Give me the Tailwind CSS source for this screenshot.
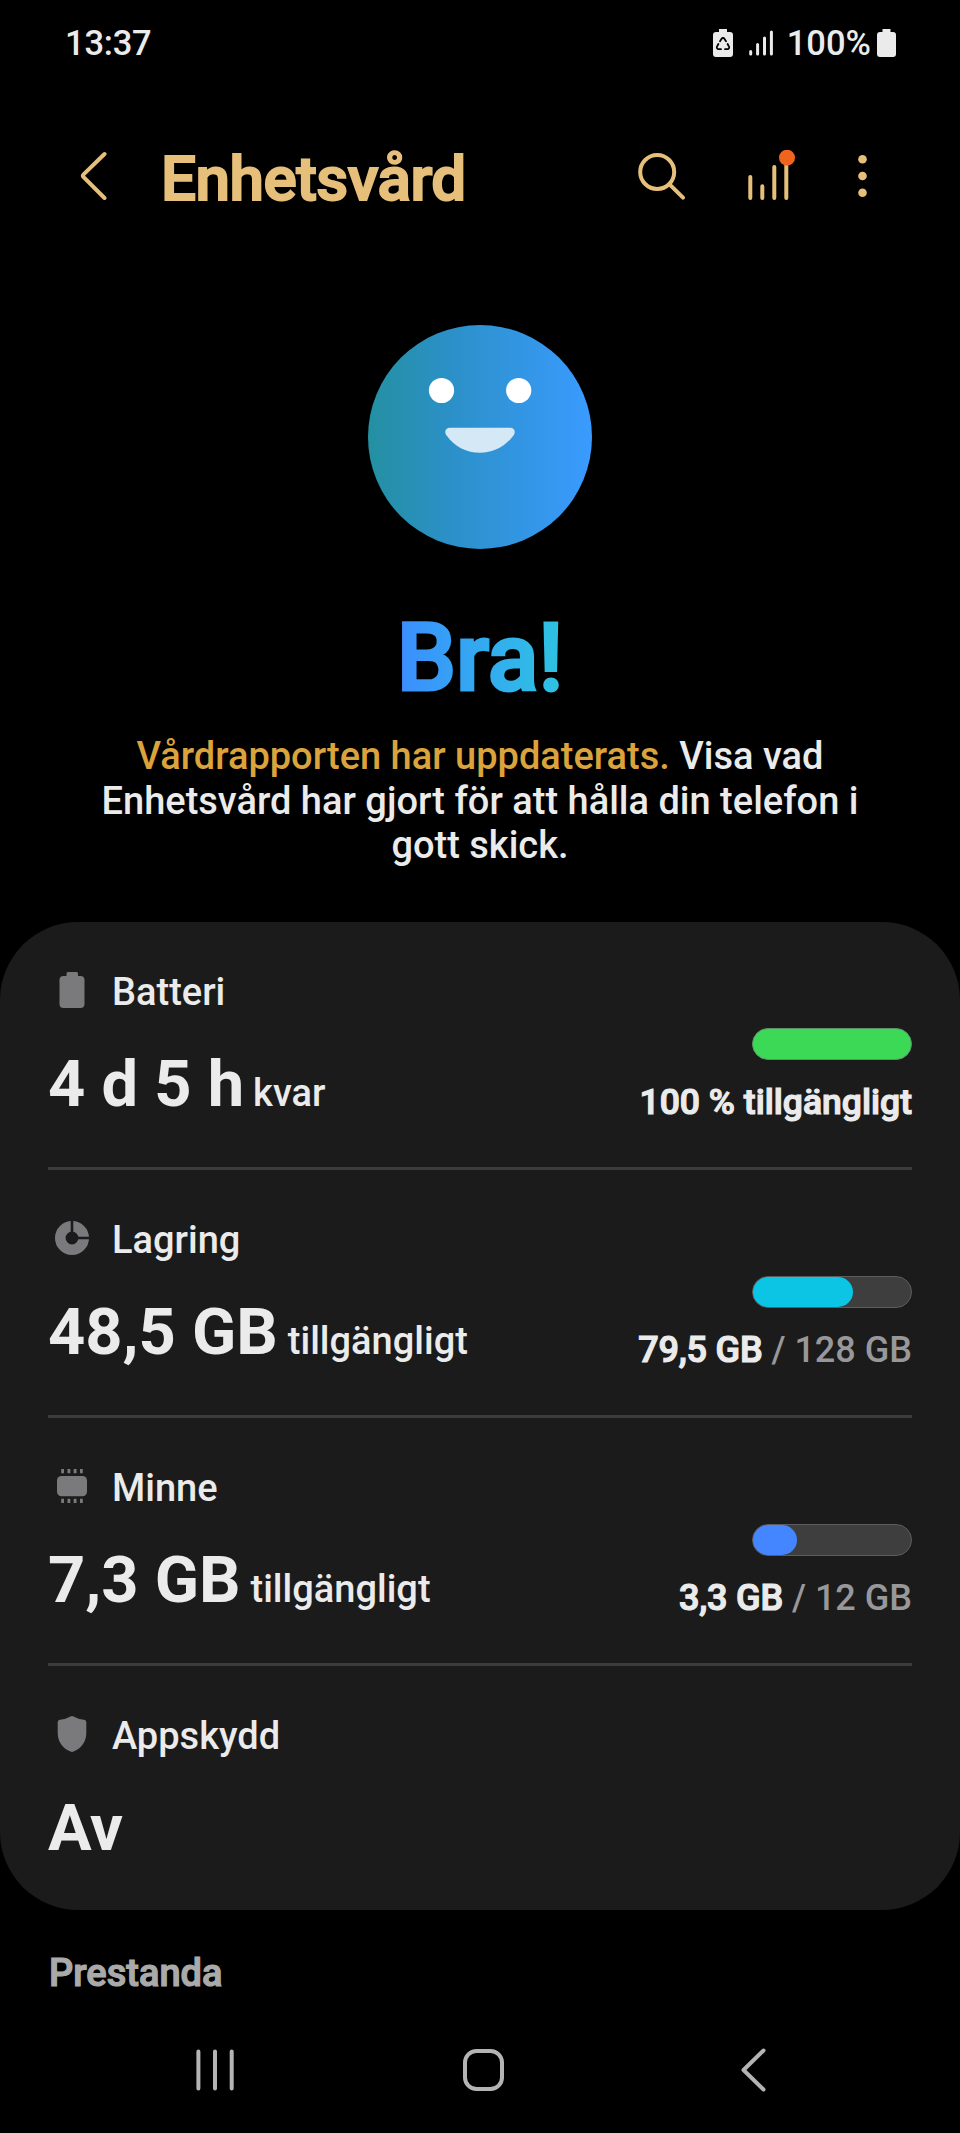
<!DOCTYPE html>
<html lang="sv">
<head>
    <meta charset="UTF-8">
    <meta name="viewport" content="width=device-width, initial-scale=1.0">
    <title>Enhetsvård</title>
    <script src="https://cdn.jsdelivr.net/npm/@tailwindcss/browser@4"></script>
</head>
<body class="bg-black">
<div class="flex flex-col w-[960px] h-[2133px] overflow-hidden bg-black font-['Roboto',sans-serif] font-medium text-[#ebebeb]">

    <!-- Status bar -->
    <div class="flex items-center justify-between h-[87px] shrink-0 pl-[65px] pr-[64px] text-[34.5px]">
        <span class="tracking-[-0.2px]">13:37</span>
        <div class="flex items-center">
            <svg class="w-5 h-7 mr-[16px] mb-[2px]" viewBox="0 0 20 28" fill="none">
                <path d="M6 0h8v3h3a3 3 0 0 1 3 3v19a3 3 0 0 1-3 3H3a3 3 0 0 1-3-3V6a3 3 0 0 1 3-3h3z" fill="#ebebeb"/>
                <g stroke="#000" stroke-width="1.8" stroke-linecap="round" stroke-linejoin="round">
                    <path d="M7 12.2 8.6 9.7a1.6 1.6 0 0 1 2.8 0l1.6 2.5"/>
                    <path d="M14.6 15l1.1 2a1.9 1.9 0 0 1-1.6 3.2H12"/>
                    <path d="M5.4 15l-1.1 2a1.9 1.9 0 0 0 1.6 3.2H8"/>
                </g>
            </svg>
            <svg class="w-6 h-[26px] mr-[14px] mb-[2px]" viewBox="0 0 24 26" stroke="#ebebeb" stroke-width="3" stroke-linecap="round">
                <path d="M1.7 21.5v2.5M8.6 14.5V24M15.5 8V24M22.4 2V24"/>
            </svg>
            <span class="mr-[6px]">100%</span>
            <svg class="w-[19px] h-7 mb-[2px]" viewBox="0 0 19 28">
                <path d="M5.5 0h8v3H16a3 3 0 0 1 3 3v19a3 3 0 0 1-3 3H3a3 3 0 0 1-3-3V6a3 3 0 0 1 3-3h2.5z" fill="#ebebeb"/>
            </svg>
        </div>
    </div>

    <!-- App bar -->
    <header class="flex items-center h-[178px] shrink-0 pl-[80px] pr-[93px] text-[#e6bf7a]">
        <svg class="w-7 h-[52px]" viewBox="0 0 28 52" fill="none" stroke="currentColor" stroke-width="4" stroke-linecap="round" stroke-linejoin="round">
            <path d="M24.5 4 3.6 24.4a2 2 0 0 0 0 2.8L24.5 48"/>
        </svg>
        <h1 class="mt-[6px] ml-[53px] text-[62px] leading-[76px] tracking-[-0.5px] [-webkit-text-stroke:2px_currentColor]">Enhetsvård</h1>
        <svg class="w-12 h-12 ml-auto mr-[62px]" viewBox="0 0 48 48" fill="none" stroke="currentColor" stroke-width="4" stroke-linecap="round">
            <circle cx="19.2" cy="20" r="17"/>
            <path d="M31.8 32.6 45 45.6"/>
        </svg>
        <svg class="w-12 h-[52px] mr-[62px]" viewBox="0 0 48 52" fill="none" stroke="currentColor" stroke-width="4" stroke-linecap="round">
            <path d="M2.3 27V48M14.3 36.2V48M26.3 17V48M38.3 10V48"/>
            <circle cx="39" cy="7.7" r="8" fill="#f0641e" stroke="none"/>
        </svg>
        <svg class="w-[9px] h-11" viewBox="0 0 9 44" fill="currentColor">
            <circle cx="4.5" cy="5.2" r="4.3"/>
            <circle cx="4.5" cy="22" r="4.3"/>
            <circle cx="4.5" cy="38.7" r="4.3"/>
        </svg>
    </header>

    <!-- Overall status -->
    <section class="flex flex-col items-center h-[657px] shrink-0 pt-[60px]">
        <svg class="w-[224px] h-[224px]" viewBox="0 0 224 224">
            <defs>
                <linearGradient id="face" x1="0" x2="1" y1="0" y2="0">
                    <stop offset="0" stop-color="#2490a2"/>
                    <stop offset="0.35" stop-color="#2b90c6"/>
                    <stop offset="1" stop-color="#3a9bff"/>
                </linearGradient>
            </defs>
            <circle cx="112" cy="112" r="112" fill="url(#face)"/>
            <circle cx="73.5" cy="65.5" r="12.6" fill="#fff"/>
            <circle cx="150.7" cy="65.5" r="12.6" fill="#fff"/>
            <path d="M82 102.7h60c4.4 0 6 4 3.6 7.5C137 122 125.5 127.7 112 127.7S87 122 78.4 110.2C76 106.7 77.6 102.7 82 102.7z" fill="#d5e8f6"/>
        </svg>
        <h2 class="mt-[52px] px-1 text-[94px] leading-[114px] bg-linear-to-r from-[#3c8cff] to-[#2ec4e0] bg-clip-text text-transparent [-webkit-text-stroke:3px_transparent]">Bra!</h2>
        <p class="mt-[19px] w-[780px] text-center text-[38px] leading-[44.6px]">
            <span class="text-[#dba33c]">Vårdrapporten har uppdaterats.</span> Visa vad Enhetsvård har gjort för att hålla din telefon i gott skick.
        </p>
    </section>

    <!-- Details card -->
    <main class="shrink-0 h-[988px] px-12 rounded-[78px] bg-[#1b1b1b]">
        <div class="flex justify-between h-[248px] border-b-3 border-[#3c3c3c]">
            <div class="pt-[46px]">
                <div class="flex items-center gap-4 h-12 text-[38px]">
                    <svg class="w-12 h-12" viewBox="0 0 48 48" fill="#7a7a7c">
                        <path d="M20 4h8.5a1.5 1.5 0 0 1 1.5 1.5V8h2.5a4 4 0 0 1 4 4v24a4 4 0 0 1-4 4h-17a4 4 0 0 1-4-4V12a4 4 0 0 1 4-4h3V5.5A1.5 1.5 0 0 1 20 4z"/>
                    </svg>
                    <span>Batteri</span>
                </div>
                <div class="mt-[30px] leading-[76px] whitespace-nowrap"><span class="text-[65px] font-bold">4 d 5 h</span><span class="ml-[9px] text-[38px]">kvar</span></div>
            </div>
            <div class="flex flex-col items-end pt-[106px]">
                <div class="w-40 h-8 rounded-full border border-[#5f8f68] bg-[#3cd957]"></div>
                <div class="mt-5 text-[35.5px] leading-[44px] whitespace-nowrap [-webkit-text-stroke:1.2px_currentColor]">100 % tillgängligt</div>
            </div>
        </div>

        <div class="flex justify-between h-[248px] border-b-3 border-[#3c3c3c]">
            <div class="pt-[46px]">
                <div class="flex items-center gap-4 h-12 text-[38px]">
                    <svg class="w-12 h-12" viewBox="0 0 48 48">
                        <circle cx="24" cy="22" r="11.7" fill="none" stroke="#7a7a7c" stroke-width="10.6"/>
                        <path d="M24 16V4M30 22H42" stroke="#1b1b1b" stroke-width="2.6"/>
                    </svg>
                    <span>Lagring</span>
                </div>
                <div class="mt-[30px] leading-[76px] whitespace-nowrap"><span class="text-[65px] font-bold">48,5 GB</span><span class="ml-[10px] text-[38px]">tillgängligt</span></div>
            </div>
            <div class="flex flex-col items-end pt-[106px]">
                <div class="w-40 h-8 rounded-full border border-[#5c5c5c] bg-[#3e3e3e]">
                    <div class="h-full w-[100px] rounded-full bg-[#0cc4e4]"></div>
                </div>
                <div class="mt-5 text-[36px] leading-[44px] whitespace-nowrap text-[#98989a]"><span class="text-[#ebebeb] tracking-[-0.2px] [-webkit-text-stroke:1.2px_currentColor]">79,5 GB</span> / 128 GB</div>
            </div>
        </div>

        <div class="flex justify-between h-[248px] border-b-3 border-[#3c3c3c]">
            <div class="pt-[46px]">
                <div class="flex items-center gap-4 h-12 text-[38px]">
                    <svg class="w-12 h-12" viewBox="0 0 48 48" fill="#7a7a7c">
                        <rect x="9" y="12" width="30" height="20.3" rx="4.5"/>
                        <path d="M14.6 5v4.3M20.9 5v4.3M27.1 5v4.3M33.4 5v4.3M14.6 34.7v4.3M20.9 34.7v4.3M27.1 34.7v4.3M33.4 34.7v4.3" stroke="#7a7a7c" stroke-width="2.8"/>
                    </svg>
                    <span>Minne</span>
                </div>
                <div class="mt-[30px] leading-[76px] whitespace-nowrap"><span class="text-[65px] font-bold">7,3 GB</span><span class="ml-[10px] text-[38px]">tillgängligt</span></div>
            </div>
            <div class="flex flex-col items-end pt-[106px]">
                <div class="w-40 h-8 rounded-full border border-[#5c5c5c] bg-[#3e3e3e]">
                    <div class="h-full w-11 rounded-full bg-[#4486ff]"></div>
                </div>
                <div class="mt-5 text-[36px] leading-[44px] whitespace-nowrap text-[#98989a]"><span class="text-[#ebebeb] tracking-[-0.2px] [-webkit-text-stroke:1.2px_currentColor]">3,3 GB</span> / 12 GB</div>
            </div>
        </div>

        <div class="pt-[46px]">
            <div class="flex items-center gap-4 h-12 text-[38px]">
                <svg class="w-12 h-12" viewBox="0 0 48 48" fill="#7a7a7c">
                    <path d="M22.5 4.6Q24 3.6 25.5 4.6 29.5 7 36 7.8 38.3 8.1 38.3 10.2V21C38.3 30 33 36.5 25.5 39.6Q24 40.2 22.5 39.6C15 36.5 9.7 30 9.7 21V10.2Q9.7 8.1 12 7.8 18.5 7 22.5 4.6z"/>
                </svg>
                <span>Appskydd</span>
            </div>
            <div class="mt-[30px] text-[65px] leading-[76px] font-bold">Av</div>
        </div>
    </main>

    <div class="mt-[39px] pl-[49px] text-[38px] leading-[48px] text-[#aaaaaa] [-webkit-text-stroke:1.2px_currentColor]">Prestanda</div>

    <!-- Navigation bar -->
    <nav class="flex items-center mt-[49px] pl-[194px] text-[#b4b4b4]">
        <svg class="w-[42px] h-12" viewBox="0 0 42 48" stroke="currentColor" stroke-width="4" stroke-linecap="round">
            <path d="M4.4 5.5V42.5M21 5.5V42.5M37.7 5.5V42.5"/>
        </svg>
        <svg class="w-12 h-12 ml-[224px]" viewBox="0 0 48 48" fill="none" stroke="currentColor" stroke-width="4">
            <rect x="5" y="5" width="37" height="38" rx="11.5"/>
        </svg>
        <svg class="w-7 h-12 ml-[231px]" viewBox="0 0 28 48" fill="none" stroke="currentColor" stroke-width="4" stroke-linecap="round" stroke-linejoin="round">
            <path d="M24.5 4.5 4.5 24l20 19.5"/>
        </svg>
    </nav>
</div>
</body>
</html>
